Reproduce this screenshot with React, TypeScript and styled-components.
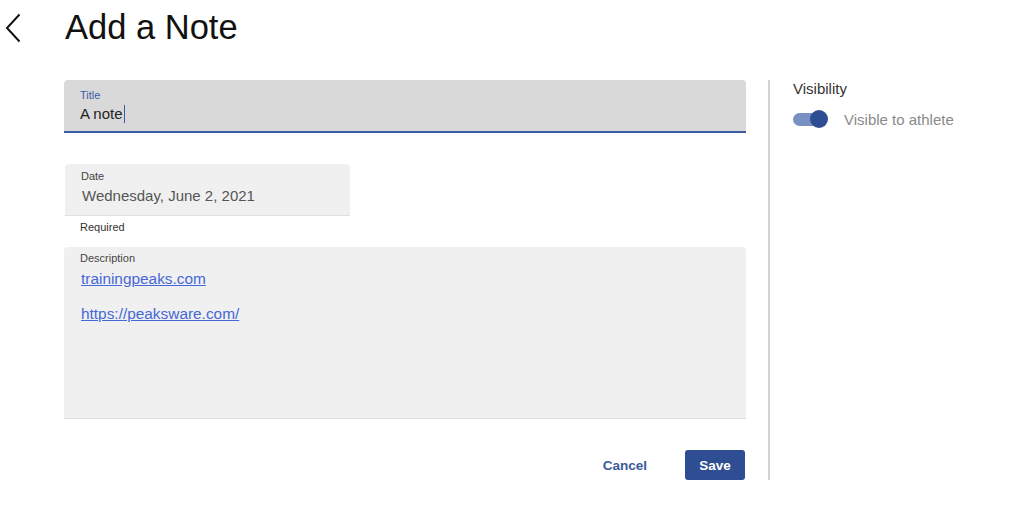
import React from 'react';
import styled, {createGlobalStyle} from 'styled-components';

const GlobalStyle = createGlobalStyle`
    body {
        margin: 0;
        background: #ffffff;
        font-family: 'Liberation Sans', Arial, sans-serif;
        color: #222;
    }
`;

const Page = styled.div`
    display: flex;
    flex-direction: column;
    width: 1024px;
    height: 508px;
`;

const Header = styled.div`
    display: flex;
    align-items: center;
    height: 55px;
    padding-left: 5px;
    gap: 44px;
`;

const BackButton = styled.button`
    display: flex;
    align-items: center;
    border: none;
    background: none;
    padding: 0;
    cursor: pointer;
`;

const Heading = styled.h1`
    margin: 0;
    font-size: 34.5px;
    line-height: 1;
    font-weight: 400;
    color: #111;
`;

const Body = styled.div`
    display: flex;
    margin-top: 25px;
    padding-left: 64px;
`;

const FormColumn = styled.div`
    display: flex;
    flex-direction: column;
    width: 682px;
`;

const Field = styled.div<{$width?: number; $focused?: boolean; $height?: number}>`
    display: flex;
    flex-direction: column;
    width: ${p => (p.$width ? `${p.$width}px` : '100%')};
    box-sizing: border-box;
    background: ${p => (p.$focused ? '#d9d9d9' : '#f0f0f0')};
    border-radius: 4px 4px 0 0;
    border-bottom: ${p => (p.$focused ? '2px solid #3a5ba0' : '1px solid #e0e0e0')};
    padding: 5px 16px 9px;
    ${p => (p.$height ? `height: ${p.$height}px;` : '')}
`;

const TitleField = styled(Field)`
    padding: 8px 16px 7px;
`;

const DateField = styled(Field)`
    margin-top: 31px;
    margin-left: 1px;
    padding: 5px 16px 9px 16px;
`;

const DescriptionField = styled(Field)`
    margin-top: 13px;
    padding: 4px 16px;
`;

const Label = styled.label<{$active?: boolean}>`
    font-size: 11px;
    line-height: 14px;
    color: ${p => (p.$active ? '#3d5ca8' : '#444')};
`;

const Value = styled.div<{$muted?: boolean}>`
    margin-top: ${p => (p.$muted ? '3px' : '2px')};
    padding-left: ${p => (p.$muted ? '1px' : '0')};
    font-size: 15px;
    line-height: 20px;
    color: ${p => (p.$muted ? '#555' : '#222')};
`;

const Caret = styled.span`
    display: inline-block;
    width: 1px;
    height: 18px;
    margin-left: 1px;
    vertical-align: -4px;
    background: #3a5ba0;
`;

const Helper = styled.div`
    margin-top: 4px;
    padding-left: 16px;
    font-size: 11px;
    line-height: 14px;
    color: #333;
`;

const LinkLine = styled.a<{$gap: number}>`
    display: block;
    align-self: flex-start;
    margin-top: ${p => p.$gap}px;
    padding-left: 1px;
    font-size: 15.4px;
    line-height: 20px;
    color: #4668d6;
    text-decoration: underline;
`;

const Actions = styled.div`
    display: flex;
    justify-content: flex-end;
    align-items: center;
    gap: 26px;
    margin-top: 31px;
    padding-right: 1px;
`;

const TextButton = styled.button`
    border: none;
    background: none;
    padding: 0 12px;
    height: 30px;
    font-family: inherit;
    font-size: 13.5px;
    font-weight: 700;
    color: #3b5a9c;
    cursor: pointer;
`;

const PrimaryButton = styled.button`
    width: 60px;
    height: 30px;
    border: none;
    border-radius: 3px;
    background: #2f4d92;
    color: #fff;
    font-family: inherit;
    font-size: 13.5px;
    font-weight: 700;
    cursor: pointer;
`;

const Divider = styled.div`
    width: 2px;
    margin-left: 22px;
    background: #d4d4d4;
`;

const Side = styled.div`
    display: flex;
    flex-direction: column;
    padding-left: 23px;
`;

const SideTitle = styled.div`
    font-size: 15px;
    line-height: 18px;
    color: #333;
`;

const ToggleRow = styled.div`
    display: flex;
    align-items: center;
    gap: 16px;
    height: 24px;
    margin-top: 9px;
`;

const Toggle = styled.div`
    position: relative;
    width: 35px;
    height: 18px;
`;

const Track = styled.div`
    position: absolute;
    left: 0;
    top: 3px;
    width: 31px;
    height: 13px;
    border-radius: 7px;
    background: #7890c2;
`;

const Thumb = styled.div`
    position: absolute;
    left: 17px;
    top: 0;
    width: 18px;
    height: 18px;
    border-radius: 50%;
    background: #2f4d92;
`;

const ToggleText = styled.span`
    font-size: 15px;
    color: #8a8a8a;
`;

export default function App() {
    return (
        <Page>
            <GlobalStyle />
            <Header>
                <BackButton aria-label="Back">
                    <svg width="16" height="30" viewBox="0 0 16 30" fill="none">
                        <path d="M14.5 1.5 L2 15 L14.5 28.5" stroke="#111" strokeWidth="2" />
                    </svg>
                </BackButton>
                <Heading>Add a Note</Heading>
            </Header>
            <Body>
                <FormColumn>
                    <TitleField $focused>
                        <Label $active>Title</Label>
                        <Value>
                            A note
                            <Caret />
                        </Value>
                    </TitleField>
                    <DateField $width={285}>
                        <Label>Date</Label>
                        <Value $muted>Wednesday, June 2, 2021</Value>
                    </DateField>
                    <Helper>Required</Helper>
                    <DescriptionField $height={172}>
                        <Label>Description</Label>
                        <LinkLine $gap={4} href="#">trainingpeaks.com</LinkLine>
                        <LinkLine $gap={15} href="#">https://peaksware.com/</LinkLine>
                    </DescriptionField>
                    <Actions>
                        <TextButton>Cancel</TextButton>
                        <PrimaryButton>Save</PrimaryButton>
                    </Actions>
                </FormColumn>
                <Divider />
                <Side>
                    <SideTitle>Visibility</SideTitle>
                    <ToggleRow>
                        <Toggle>
                            <Track />
                            <Thumb />
                        </Toggle>
                        <ToggleText>Visible to athlete</ToggleText>
                    </ToggleRow>
                </Side>
            </Body>
        </Page>
    );
}
